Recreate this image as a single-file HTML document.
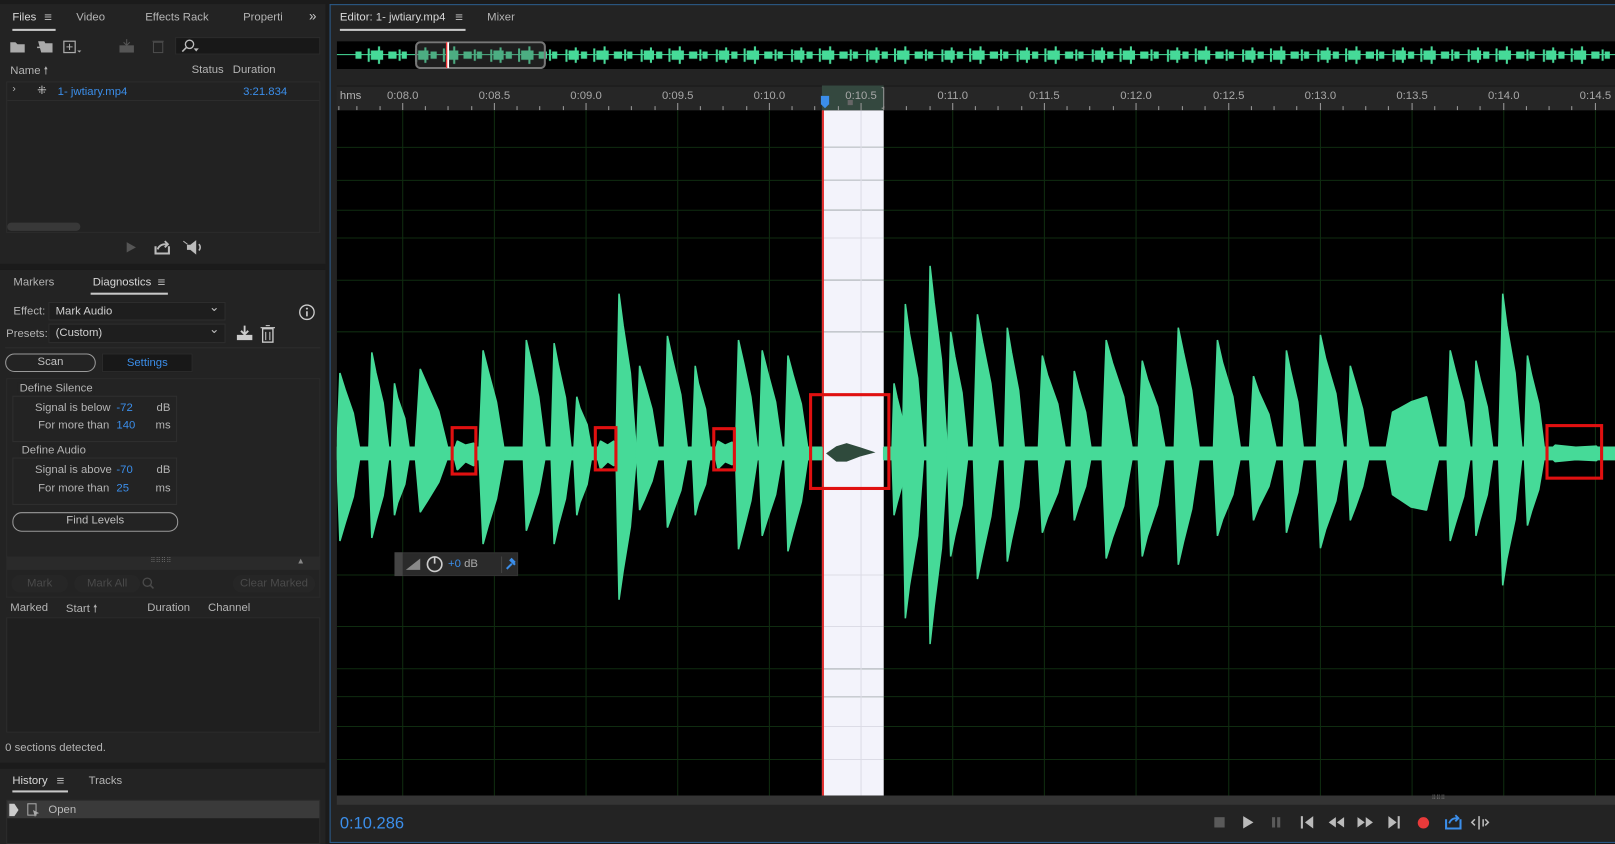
<!DOCTYPE html>
<html><head><meta charset="utf-8">
<style>
*{margin:0;padding:0;box-sizing:border-box}
html,body{width:1615px;height:844px;overflow:hidden;background:#1b1b1b}
#w{position:absolute;left:0;top:0;width:1568px;height:819px;transform:scale(1.02997,1.0305);transform-origin:0 0;font-family:"Liberation Sans",sans-serif;font-size:11px;color:#b4b4b4}
.a{position:absolute}
.t{position:absolute;white-space:nowrap}
.blue{color:#3b8eea}
.dim{color:#565656}
.pn{position:absolute;background:#232323}
.box{position:absolute;border:1px solid #2c2c2c;background:#1f1f1f}
.ul{position:absolute;height:2px;background:#c8c8c8}
.dd{position:absolute;background:#1e1e1e;border:1px solid #2e2e2e;color:#d0d0d0;padding-left:6px;line-height:16px}
.dd:after{content:"⌄";position:absolute;right:5px;top:-4px;color:#bbb;font-size:12px}
.btn{position:absolute;border:1.5px solid #9a9a9a;border-radius:9px;text-align:center;color:#c0c0c0;line-height:15px}
.dbtn{position:absolute;background:#262626;border-radius:9px;text-align:center;color:#4a4a4a;line-height:17px}
</style></head><body><div id="w">

<!-- left panels -->
<div class="pn" style="left:0;top:4px;width:316px;height:252px"></div>
<div class="pn" style="left:0;top:262px;width:316px;height:478px"></div>
<div class="pn" style="left:0;top:746px;width:316px;height:73px"></div>

<div class="t" style="left:12px;top:11px;color:#d8d8d8">Files</div>
<div class="t" style="left:43px;top:9px;font-size:13px">≡</div>
<div class="ul" style="left:12px;top:28px;width:42px"></div>
<div class="t" style="left:74px;top:11px">Video</div>
<div class="t" style="left:141px;top:11px">Effects Rack</div>
<div class="t" style="left:236px;top:11px">Properti</div>
<div class="t" style="left:300px;top:8px;font-size:13px;color:#ccc">»</div>

<!-- toolbar icons -->
<svg class="a" style="left:8px;top:36px" width="160" height="18">
<path d="M2 5h5l2 2h7v8H2z" fill="#aaa"/>
<path d="M29 4h6l1 2h7v9H32" fill="#aaa"/><path d="M28 10h6M32 7l3 3-3 3" stroke="#aaa" fill="none" stroke-width="1.5"/>
<rect x="54" y="4" width="11" height="11" fill="none" stroke="#aaa" stroke-width="1.2"/><path d="M59.5 6.5v6M56.5 9.5h6" stroke="#aaa"/><path d="M67 13l2 2 2-2" fill="#aaa"/>
<rect x="108" y="8" width="14" height="7" fill="#555"/><path d="M115 2v6M112 5l3 3 3-3" stroke="#555" fill="none"/>
<rect x="141" y="5" width="9" height="10" fill="none" stroke="#4c4c4c"/><path d="M140 4h11" stroke="#4c4c4c"/>
</svg>
<div class="a" style="left:170px;top:36px;width:141px;height:17px;background:#181818;border:1px solid #2c2c2c"></div>
<svg class="a" style="left:174px;top:37px" width="22" height="16"><circle cx="10" cy="6" r="4" fill="none" stroke="#bbb" stroke-width="1.3"/><path d="M7 9l-4 4" stroke="#bbb" stroke-width="1.5"/><path d="M14 10h5l-2.5 3z" fill="#bbb"/></svg>

<div class="t" style="left:10px;top:62px">Name <span style="font-size:10px">🠕</span></div>
<div class="t" style="left:186px;top:62px">Status</div>
<div class="t" style="left:226px;top:62px">Duration</div>
<div class="box" style="left:6px;top:79px;width:305px;height:147px;background:#222"></div>
<div class="a" style="left:7px;top:80px;width:303px;height:18px;border-bottom:1px solid #2c2c2c"></div>
<div class="t" style="left:12px;top:81px;font-size:10px">›</div>
<div class="t" style="left:36px;top:81px;font-size:11px;color:#ccc">⁜</div>
<div class="t blue" style="left:56px;top:83px">1- jwtiary.mp4</div>
<div class="t blue" style="left:236px;top:83px">3:21.834</div>
<div class="a" style="left:7px;top:216px;width:71px;height:8px;border-radius:4px;background:#383838"></div>
<svg class="a" style="left:120px;top:232px" width="80" height="16">
<path d="M3 3l9 5-9 5z" fill="#555"/>
<path d="M31 7v7h13V7" fill="none" stroke="#bbb" stroke-width="2"/><path d="M33 10c2-5 6-5 9-5M40 2l3 3-3 3" fill="none" stroke="#bbb" stroke-width="1.8"/>
<path d="M58 2l4 3M62 6h3l5-4v12l-5-4h-3z" fill="#bbb" stroke="#bbb"/><path d="M73 5a4 4 0 0 1 0 6" stroke="#bbb" fill="none" stroke-width="1.5"/>
</svg>

<!-- Diagnostics -->
<div class="t" style="left:13px;top:268px">Markers</div>
<div class="t" style="left:90px;top:268px;color:#d8d8d8">Diagnostics</div>
<div class="t" style="left:153px;top:266px;font-size:13px">≡</div>
<div class="ul" style="left:88px;top:284px;width:75px"></div>

<div class="t" style="left:13px;top:296px">Effect:</div>
<div class="dd" style="left:47px;top:293px;width:172px;height:18px">Mark Audio</div>
<svg class="a" style="left:289px;top:294px" width="18" height="18"><circle cx="9" cy="9" r="7" fill="none" stroke="#ccc" stroke-width="1.3"/><path d="M9 8v5" stroke="#ccc" stroke-width="1.6"/><circle cx="9" cy="5.5" r="1" fill="#ccc"/></svg>
<div class="t" style="left:6px;top:318px">Presets:</div>
<div class="dd" style="left:47px;top:314px;width:172px;height:19px">(Custom)</div>
<svg class="a" style="left:228px;top:314px" width="44" height="19">
<path d="M2 11h15v5H2z" fill="#ccc"/><path d="M9.5 2v8M6 7l3.5 3.5L13 7" stroke="#ccc" fill="none" stroke-width="1.8"/>
<rect x="27" y="5" width="10" height="13" fill="none" stroke="#ccc" stroke-width="1.3"/><path d="M25 4h14M30 2h4M30 8v8M34 8v8" stroke="#ccc"/>
</svg>
<div class="a" style="left:5px;top:337px;width:306px;height:1px;background:#2e2e2e"></div>
<div class="btn" style="left:5px;top:343px;width:88px;height:18px">Scan</div>
<div class="a" style="left:99px;top:343px;width:88px;height:18px;background:#181818;border:1px solid #2a2a2a;text-align:center;line-height:16px;color:#3b8eea">Settings</div>

<div class="box" style="left:6px;top:367px;width:305px;height:174px;background:#232323;border-color:#2b2b2b"></div>
<div class="a" style="left:12px;top:384px;width:160px;height:45px;border:1px solid #2f2f2f"></div>
<div class="t" style="left:17px;top:371px;background:#232323;padding:0 2px">Define Silence</div>
<div class="t" style="left:34px;top:390px">Signal is below</div><div class="t blue" style="left:113px;top:390px">-72</div><div class="t" style="left:152px;top:390px">dB</div>
<div class="t" style="left:37px;top:407px">For more than</div><div class="t blue" style="left:113px;top:407px">140</div><div class="t" style="left:151px;top:407px">ms</div>
<div class="a" style="left:12px;top:444px;width:160px;height:46px;border:1px solid #2f2f2f"></div>
<div class="t" style="left:19px;top:431px;background:#232323;padding:0 2px">Define Audio</div>
<div class="t" style="left:34px;top:450px">Signal is above</div><div class="t blue" style="left:113px;top:450px">-70</div><div class="t" style="left:152px;top:450px">dB</div>
<div class="t" style="left:37px;top:468px">For more than</div><div class="t blue" style="left:113px;top:468px">25</div><div class="t" style="left:151px;top:468px">ms</div>
<div class="btn" style="left:12px;top:497px;width:161px;height:19px">Find Levels</div>

<div class="a" style="left:6px;top:541px;width:305px;height:12px;background:#2a2a2a"></div>
<div class="t" style="left:146px;top:540px;font-size:7px;color:#666">⠿⠿⠿⠿</div>
<div class="t" style="left:288px;top:540px;font-size:8px;color:#888">▲</div>
<div class="a" style="left:6px;top:553px;width:305px;height:27px;border:1px solid #2a2a2a;border-top:none"></div>
<div class="dbtn" style="left:11px;top:558px;width:55px;height:17px">Mark</div>
<div class="dbtn" style="left:72px;top:558px;width:64px;height:17px">Mark All</div>
<svg class="a" style="left:137px;top:559px" width="14" height="14"><circle cx="6" cy="6" r="4" fill="none" stroke="#4a4a4a" stroke-width="1.3"/><path d="M9 9l3 3" stroke="#4a4a4a" stroke-width="1.5"/></svg>
<div class="dbtn" style="left:226px;top:558px;width:80px;height:17px">Clear Marked</div>
<div class="t" style="left:10px;top:584px">Marked</div>
<div class="t" style="left:64px;top:584px">Start <span style="font-size:10px">🠕</span></div>
<div class="t" style="left:143px;top:584px">Duration</div>
<div class="t" style="left:202px;top:584px">Channel</div>
<div class="box" style="left:6px;top:599px;width:305px;height:112px"></div>
<div class="t" style="left:5px;top:720px">0 sections detected.</div>

<div class="t" style="left:12px;top:752px;color:#d8d8d8">History</div>
<div class="t" style="left:55px;top:750px;font-size:13px">≡</div>
<div class="ul" style="left:12px;top:767px;width:54px"></div>
<div class="t" style="left:86px;top:752px">Tracks</div>
<div class="box" style="left:6px;top:776px;width:305px;height:43px;background:#1e1e1e"></div>
<div class="a" style="left:7px;top:777px;width:303px;height:17px;background:#3a3a3a"></div>
<svg class="a" style="left:8px;top:779px" width="34" height="14"><path d="M1 1h5l4 6-4 6H1z" fill="#ccc"/><rect x="19" y="1" width="8" height="11" fill="none" stroke="#aaa"/><path d="M24 7l6 3-3 1-1 3z" fill="#aaa"/></svg>
<div class="t" style="left:47px;top:780px;color:#bbb">Open</div>

<!-- editor -->
<div class="a" style="left:320px;top:4px;width:1248px;height:814px;background:#232323;border:1px solid #2b5b8c;border-right:none"></div>
<div class="t" style="left:330px;top:11px;color:#d8d8d8">Editor: 1- jwtiary.mp4</div>
<div class="t" style="left:442px;top:9px;font-size:13px">≡</div>
<div class="ul" style="left:330px;top:28px;width:122px"></div>
<div class="t" style="left:473px;top:11px">Mixer</div>

<!-- overview -->
<svg class="a" style="left:327px;top:40px" width="1241" height="27">
<defs><pattern id="ov" width="73" height="27" patternUnits="userSpaceOnUse">
<g fill="#46da98"><rect x="3" y="8" width="2" height="12"/><rect x="6" y="9" width="10" height="9"/><rect x="12" y="6" width="2" height="15"/><rect x="18" y="10" width="6" height="7"/><rect x="30" y="7" width="2" height="13"/><rect x="33" y="9" width="12" height="9"/><rect x="40" y="5" width="2" height="17"/><rect x="50" y="10" width="8" height="7"/><rect x="60" y="8" width="2" height="11"/><rect x="63" y="10" width="5" height="7"/></g></pattern></defs>
<rect width="1241" height="27" fill="#000"/>
<rect y="12.5" width="1241" height="1" fill="#46da98"/>
<rect x="18" width="1223" height="27" fill="url(#ov)"/>
<rect x="77" y="1" width="125" height="25" rx="4" fill="rgba(90,90,90,0.35)" stroke="#777" stroke-width="2"/>
<rect x="106" y="1" width="3" height="25" fill="#fff"/><rect x="106" y="1" width="1.3" height="25" fill="#e33"/>
</svg>

<!-- ruler -->
<div class="a" style="left:327px;top:83px;width:1241px;height:24px;background:#262626;border-top:1px solid #181818"></div>
<div class="a" style="left:798px;top:83px;width:60px;height:24px;background:#34483f"></div>
<div class="t" style="left:330px;top:87px">hms</div>
<svg class="a" style="left:327px;top:83px" width="1241" height="24" font-family="Liberation Sans" font-size="11" fill="#a8a8a8">
<g text-anchor="middle">
<text x="64" y="13">0:08.0</text><text x="153" y="13">0:08.5</text><text x="242" y="13">0:09.0</text><text x="331" y="13">0:09.5</text><text x="420" y="13">0:10.0</text><text x="509" y="13">0:10.5</text><text x="598" y="13">0:11.0</text><text x="687" y="13">0:11.5</text><text x="776" y="13">0:12.0</text><text x="866" y="13">0:12.5</text><text x="955" y="13">0:13.0</text><text x="1044" y="13">0:13.5</text><text x="1133" y="13">0:14.0</text><text x="1222" y="13">0:14.5</text></g>
<g stroke="#9a9a9a" stroke-width="1">
<path d="M64 17v7M153 17v7M242 17v7M331 17v7M420 17v7M509 17v7M598 17v7M687 17v7M776 17v7M866 17v7M955 17v7M1044 17v7M1133 17v7M1222 17v7"/>
<path d="M2 20v4M19.5 20v4M42 20v4M86 20v4M108 20v4M131 20v4M175 20v4M197 20v4M220 20v4M264 20v4M286 20v4M309 20v4M353 20v4M375 20v4M398 20v4M442 20v4M464 20v4M487 20v4M531 20v4M553 20v4M576 20v4M620 20v4M642 20v4M665 20v4M709 20v4M731 20v4M754 20v4M798 20v4M821 20v4M843 20v4M888 20v4M910 20v4M932 20v4M977 20v4M999 20v4M1021 20v4M1066 20v4M1088 20v4M1110 20v4M1155 20v4M1177 20v4M1199 20v4"/>
</g>
<path d="M531 2v20M531 2h-2M531 22h-2" stroke="#999" fill="none"/>
<path d="M470 10h8v8l-4 4-4-4z" fill="#3b8eea"/>
<rect x="496" y="14" width="5" height="5" fill="#666"/>
</svg>

<!-- waveform area -->
<svg class="a" style="left:327px;top:107px" width="1241" height="665" viewBox="327 107 1241 665">
<rect x="327" y="107" width="1241" height="665" fill="#000"/>
<rect x="798" y="107" width="60" height="665" fill="#f3f3fb"/>
<g stroke="#0f2c10" stroke-width="1">
<path d="M391 107v665M480 107v665M569 107v665M658 107v665M747 107v665M925 107v665M1014 107v665M1103 107v665M1193 107v665M1282 107v665M1371 107v665M1460 107v665M1549 107v665"/>
<path d="M327 143H1568M327 175H1568M327 204H1568M327 231H1568M327 272H1568M327 322H1568M327 558H1568M327 608H1568M327 649H1568M327 676H1568M327 705H1568M327 737H1568"/>
</g>
<g stroke="#dcdce6"><path d="M836 107v665M798 143h60M798 175h60M798 204h60M798 231h60M798 272h60M798 322h60M798 558h60M798 608h60M798 649h60M798 676h60M798 705h60M798 737h60"/></g>
<rect x="798" y="107" width="2" height="665" fill="#e03030"/>
<g fill="#46da98" stroke="#46da98" stroke-width="1.5" stroke-linejoin="bevel">
<rect x="327" y="434" width="471" height="12"/>
<rect x="858" y="434" width="710" height="12"/>
<polygon points="440,440 444,428 452,432 460,430 462,440 460,452 452,448 444,456"/>
<polygon points="579,440 583,428 590,432 596,428 598,440 596,452 590,448 583,455"/>
<polygon points="694,440 697,428 704,432 711,429 713,440 711,451 704,448 697,455"/>
<polygon points="1502,440 1510,432 1530,434 1550,433 1555,440 1550,447 1530,446 1510,448"/>
<polygon points="327,440 330,362 335,378 343,401 350,440 343,482 335,508 330,525"/>
<polygon points="358,440 361,342 365,362 372,391 378,440 372,481 365,506 361,522"/>
<polygon points="380,440 383,372 386,386 393,406 398,440 393,470 386,488 383,500"/>
<polygon points="403,440 408,358 415,374 426,399 436,440 426,468 415,486 408,497"/>
<polygon points="465,440 469,340 474,360 482,390 490,440 482,484 474,510 469,528"/>
<polygon points="508,440 511,330 516,352 523,385 530,440 523,478 516,500 511,515"/>
<polygon points="535,440 538,333 542,354 549,386 555,440 549,484 542,510 538,528"/>
<polygon points="557,440 560,385 563,396 570,412 575,440 570,470 563,488 560,500"/>
<polygon points="598,440 601,285 605,316 612,362 618,440 612,511 605,554 601,582"/>
<polygon points="618,440 621,355 626,372 633,397 640,440 633,467 626,484 621,495"/>
<polygon points="645,440 648,326 653,349 661,383 668,440 661,476 653,498 648,512"/>
<polygon points="672,440 675,355 678,372 685,397 690,440 685,470 678,488 675,500"/>
<polygon points="714,440 717,330 722,352 729,385 736,440 729,486 722,514 717,533"/>
<polygon points="737,440 740,340 745,360 753,390 760,440 753,480 745,504 740,520"/>
<polygon points="762,440 765,345 770,364 778,392 785,440 778,487 770,516 765,535"/>
<polygon points="866,440 868,372 871,386 876,406 880,440 876,470 871,488 868,500"/>
<polygon points="876,440 879,295 883,324 891,367 897,440 891,520 883,568 879,600"/>
<polygon points="900,440 903,258 907,294 914,349 920,440 914,532 907,588 903,625"/>
<polygon points="920,440 923,322 927,346 934,381 940,440 934,490 927,520 923,540"/>
<polygon points="945,440 949,305 954,332 962,372 970,440 962,501 954,538 949,562"/>
<polygon points="975,440 978,318 982,342 989,379 995,440 989,492 982,524 978,545"/>
<polygon points="1008,440 1012,345 1017,364 1027,392 1035,440 1027,478 1017,502 1012,517"/>
<polygon points="1040,440 1043,360 1047,376 1054,400 1060,440 1054,472 1047,492 1043,505"/>
<polygon points="1070,440 1074,330 1080,352 1091,385 1100,440 1091,491 1080,522 1074,542"/>
<polygon points="1105,440 1109,350 1114,368 1124,395 1132,440 1124,490 1114,520 1109,540"/>
<polygon points="1140,440 1144,318 1149,342 1157,379 1165,440 1157,494 1149,526 1144,548"/>
<polygon points="1178,440 1182,330 1187,352 1197,385 1205,440 1197,480 1187,504 1182,520"/>
<polygon points="1213,440 1217,365 1222,380 1232,402 1240,440 1232,472 1222,492 1217,505"/>
<polygon points="1246,440 1249,340 1253,360 1260,390 1266,440 1260,478 1253,502 1249,517"/>
<polygon points="1278,440 1282,325 1287,348 1297,382 1305,440 1297,486 1287,514 1282,532"/>
<polygon points="1308,440 1311,355 1316,372 1323,397 1330,440 1323,472 1316,492 1311,505"/>
<polygon points="1345,440 1352,400 1370,390 1385,385 1398,440 1385,495 1370,492 1352,480"/>
<polygon points="1405,440 1408,340 1413,360 1421,390 1428,440 1421,482 1413,508 1408,525"/>
<polygon points="1430,440 1433,350 1437,368 1444,395 1450,440 1444,480 1437,504 1433,520"/>
<polygon points="1455,440 1459,285 1463,316 1471,362 1478,440 1471,504 1463,542 1459,568"/>
<polygon points="1480,440 1483,345 1487,364 1494,392 1500,440 1494,475 1487,496 1483,510"/>
</g>
<polygon points="802,440 812,433 822,430 835,434 850,439 835,443 822,448 812,448" fill="#2f4a3c"/>
<g fill="none" stroke="#e01010" stroke-width="3">
<rect x="439" y="415" width="23" height="45"/>
<rect x="578" y="415" width="20" height="41"/>
<rect x="693" y="416" width="20" height="40"/>
<rect x="787" y="383" width="76" height="91"/>
<rect x="1502" y="413" width="53" height="51"/>
</g>
</svg>

<!-- gain HUD -->
<div class="a" style="left:383px;top:536px;width:120px;height:23px;background:#2a2a2a;border:1px solid #333"></div>
<div class="a" style="left:383px;top:536px;width:8px;height:23px;background:#444"></div>
<svg class="a" style="left:392px;top:538px" width="110" height="19">
<path d="M2 15h14V4z" fill="#888"/>
<circle cx="30" cy="9.5" r="7" fill="none" stroke="#ccc" stroke-width="1.6"/><path d="M30 3v6" stroke="#ccc" stroke-width="1.6"/>
<path d="M95 2v16" stroke="#444"/>
<path d="M100 14l5-5M103 5l5 5M104 4l4 4" stroke="#3b8eea" stroke-width="2"/>
</svg>
<div class="t blue" style="left:435px;top:541px">+0 <span style="color:#aaa">dB</span></div>

<!-- scrollbar + bottom -->
<div class="a" style="left:327px;top:772px;width:1241px;height:9px;background:#343434"></div>
<div class="t" style="left:1390px;top:771px;font-size:6px;color:#777">⠿⠿⠿</div>
<div class="t blue" style="left:330px;top:791px;font-size:16px">0:10.286</div>
<svg class="a" style="left:1170px;top:788px" width="290" height="20">
<rect x="9" y="5" width="10" height="10" fill="#5a5a5a"/>
<path d="M37 4l10 6-10 6z" fill="#bbb"/>
<rect x="65" y="5" width="3" height="10" fill="#5a5a5a"/><rect x="70" y="5" width="3" height="10" fill="#5a5a5a"/>
<rect x="93" y="4" width="2" height="12" fill="#bbb"/><path d="M105 4l-8 6 8 6z" fill="#bbb"/>
<path d="M127 5l-7 5 7 5zM135 5l-7 5 7 5z" fill="#bbb"/>
<path d="M148 5l7 5-7 5zM156 5l7 5-7 5z" fill="#bbb"/>
<path d="M178 4l8 6-8 6z" fill="#bbb"/><rect x="187" y="4" width="2" height="12" fill="#bbb"/>
<circle cx="212" cy="10.5" r="5.5" fill="#e83a3a"/>
<path d="M234 7v9h14V7" fill="none" stroke="#3b8eea" stroke-width="2"/><path d="M237 11c2-5 5-5 9-5M243 3l3 3-3 3" fill="none" stroke="#3b8eea" stroke-width="1.8"/>
<path d="M262 7l-3 3 3 3M266 4v13M270 7v7M272 7l3 3-3 3" fill="none" stroke="#bbb" stroke-width="1.5"/>
</svg>

</div></body></html>
